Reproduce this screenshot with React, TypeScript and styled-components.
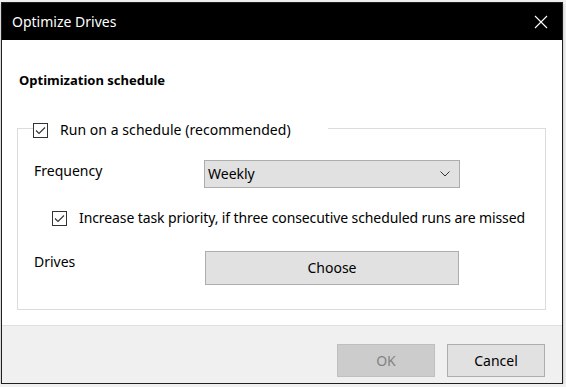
import React from 'react';
import styled, { createGlobalStyle } from 'styled-components';

const GlobalStyle = createGlobalStyle`
  html, body {
    margin: 0;
    padding: 0;
    background: #f0f0f0;
  }
  body {
    padding: 2px 0 0 1px;
    font-family: 'Noto Sans', 'Open Sans', sans-serif;
    font-size: 14px;
    color: #000;
  }
`;

const Dialog = styled.div`
  width: 562px;
  height: 382px;
  box-sizing: border-box;
  border: 1px solid #1f1f1f;
  background: #fff;
  display: flex;
  flex-direction: column;
  box-shadow: 0 2px 3px rgba(0, 0, 0, 0.25);
`;

const TitleBar = styled.div`
  height: 37px;
  background: #000;
  color: #fff;
  display: flex;
  align-items: center;
  justify-content: space-between;
  padding: 0 14px 0 10px;
  font-size: 14px;
`;

const CloseButton = styled.span`
  display: flex;
  width: 14px;
  height: 14px;
`;

const Body = styled.div`
  flex: 1;
  padding: 29px 16px 0 15px;
`;

const Heading = styled.div`
  font-weight: 700;
  font-size: 13px;
  line-height: 20px;
  padding: 1px 0 0 2px;
  height: 19px;
`;

const Group = styled.fieldset`
  margin: 27px 0 0;
  padding: 0 0 24px 16px;
  border: 1px solid #dcdcdc;
  min-width: 0;
`;

const Legend = styled.legend`
  padding: 4px 37px 0 0;
  margin-left: -1px;
  line-height: 20px;
`;

const CheckRow = styled.label<{ $indent?: number }>`
  display: flex;
  align-items: center;
  gap: 12px;
  line-height: 20px;
  letter-spacing: ${(p) => (p.$indent ? -0.1 : 0.05)}px;
  margin-left: ${(p) => p.$indent ?? 0}px;
  margin-top: ${(p) => (p.$indent ? 20 : 0)}px;
`;

const Box = styled.span`
  width: 13px;
  height: 13px;
  border: 1px solid #333;
  background: #fff;
  display: flex;
  align-items: center;
  justify-content: center;
  flex: none;
`;

const FieldRow = styled.div<{ $gap: number }>`
  display: grid;
  grid-template-columns: 170px 256px;
  align-items: start;
  margin-top: ${(p) => p.$gap}px;
  line-height: 20px;
`;

const Label = styled.span`
  padding-top: 1px;
`;

const Combo = styled.div`
  height: 28px;
  box-sizing: border-box;
  border: 1px solid #adadad;
  background: #e1e1e1;
  display: flex;
  align-items: center;
  justify-content: space-between;
  padding: 0 9px 0 3px;
`;

const Button = styled.button<{ $disabled?: boolean }>`
  font: inherit;
  box-sizing: border-box;
  border: 1px solid ${(p) => (p.$disabled ? '#bfbfbf' : '#adadad')};
  background: ${(p) => (p.$disabled ? '#cccccc' : '#e1e1e1')};
  color: ${(p) => (p.$disabled ? '#838383' : '#000')};
  padding: 0;
`;

const ChooseButton = styled(Button)`
  width: 254px;
  height: 34px;
  margin-left: 1px;
`;

const Footer = styled.div`
  height: 58px;
  box-sizing: border-box;
  border-top: 1px solid #dfdfdf;
  background: #f0f0f0;
  display: flex;
  justify-content: flex-end;
  gap: 12px;
  padding: 18px 17px 0 0;
`;

const FooterButton = styled(Button)`
  width: 98px;
  height: 33px;
`;

const Check = () => (
  <Box>
    <svg width="11" height="9" viewBox="0 0 11 9">
      <polyline points="1,4.5 4,7.5 10,1.5" fill="none" stroke="#333" strokeWidth="1.1" />
    </svg>
  </Box>
);

export default function App() {
  return (
    <>
      <GlobalStyle />
      <Dialog>
        <TitleBar>
          <span>Optimize Drives</span>
          <CloseButton>
            <svg width="14" height="14" viewBox="0 0 14 14">
              <path d="M1 1L13 13M13 1L1 13" stroke="#fff" strokeWidth="1.1" />
            </svg>
          </CloseButton>
        </TitleBar>
        <Body>
          <Heading>Optimization schedule</Heading>
          <Group>
            <Legend>
              <CheckRow>
                <Check />
                Run on a schedule (recommended)
              </CheckRow>
            </Legend>
            <FieldRow $gap={20}>
              <Label>Frequency</Label>
              <Combo>
                <span>Weekly</span>
                <svg width="10" height="6" viewBox="0 0 10 6">
                  <polyline points="0.5,0.5 5,5 9.5,0.5" fill="none" stroke="#333" strokeWidth="1" />
                </svg>
              </Combo>
            </FieldRow>
            <CheckRow $indent={18}>
              <Check />
              Increase task priority, if three consecutive scheduled runs are missed
            </CheckRow>
            <FieldRow $gap={23}>
              <Label>Drives</Label>
              <ChooseButton>Choose</ChooseButton>
            </FieldRow>
          </Group>
        </Body>
        <Footer>
          <FooterButton $disabled>OK</FooterButton>
          <FooterButton>Cancel</FooterButton>
        </Footer>
      </Dialog>
    </>
  );
}
